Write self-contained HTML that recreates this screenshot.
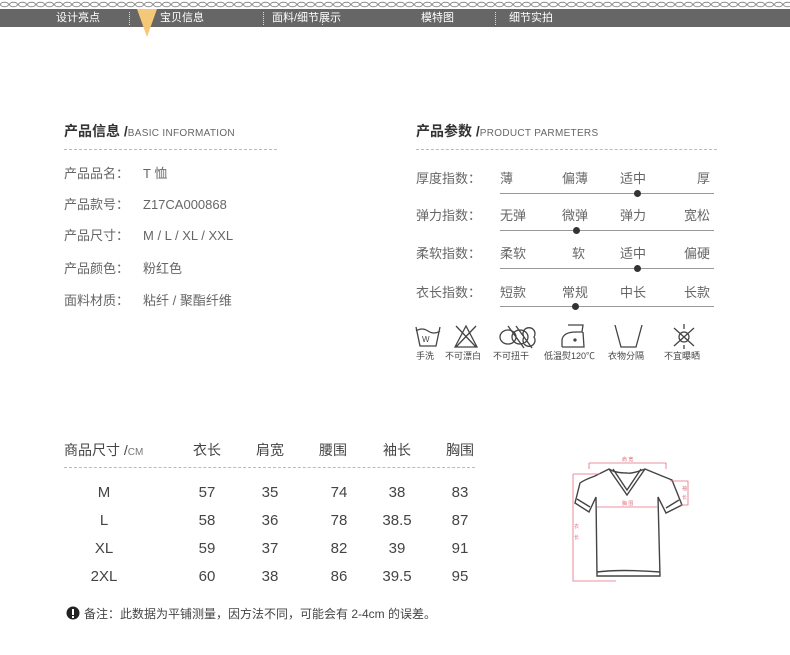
<!DOCTYPE html>
<html><head><meta charset="utf-8"><style>
*{margin:0;padding:0;box-sizing:border-box}
body{width:790px;height:655px;background:#fff;position:relative;overflow:hidden;font-family:"Liberation Sans","Noto Sans CJK SC",sans-serif;color:#555}
.a{position:absolute;white-space:nowrap}
.nav{position:absolute;left:0;top:9px;width:790px;height:18px;background:#666}
.nav span{position:absolute;top:2px;color:#fff;font-size:11px;line-height:14px}
.sep{position:absolute;top:3px;height:13px;border-left:1px dotted #ddd}
.t{font-size:14px;font-weight:bold;color:#333}
.t small{font-size:10px;font-weight:normal;color:#666;letter-spacing:.3px}
.dl{position:absolute;border-top:1px dashed #bbb;height:0}
.r{font-size:13px;color:#666;line-height:16px}
.v{position:absolute;left:143px;font-size:13px;color:#666;white-space:nowrap;line-height:16px}
.sl{position:absolute;height:1px;background:#999;left:500px;width:214px}
.dot{position:absolute;width:7px;height:7px;border-radius:50%;background:#333}
.il{font-size:9px;color:#444;top:349px}
.c{position:absolute;font-size:15px;color:#444;transform:translateX(-50%)}
.h{position:absolute;font-size:14px;color:#444;transform:translateX(-50%)}
</style></head><body>
<svg class="a" style="left:0;top:0" width="790" height="9"><defs><pattern id="ch" width="9" height="9" patternUnits="userSpaceOnUse"><ellipse cx="4.5" cy="4.5" rx="4" ry="2.3" fill="none" stroke="#888" stroke-width="1"/></pattern></defs><rect width="790" height="9" fill="url(#ch)"/></svg>
<div class="nav">
<span style="left:56px">设计亮点</span>
<div class="sep" style="left:129px"></div>
<span style="left:160px">宝贝信息</span>
<div class="sep" style="left:145px"></div>
<span style="left:272px">面料/细节展示</span>
<div class="sep" style="left:263px"></div>
<div class="sep" style="left:322px"></div>
<span style="left:421px">模特图</span>
<div class="sep" style="left:495px"></div>
<span style="left:509px">细节实拍</span>
</div>
<svg class="a" style="left:137px;top:9px" width="20" height="28"><polygon points="0,0 20,0 10,28" fill="#f5c878"/></svg>

<div class="a t" style="left:64px;top:121px">产品信息 /<small>BASIC INFORMATION</small></div>
<div class="dl" style="left:64px;top:149px;width:213px"></div>
<div class="a r" style="left:64px;top:166px">产品品名：</div><div class="v" style="top:166px">T 恤</div>
<div class="a r" style="left:64px;top:197px">产品款号：</div><div class="v" style="top:197px">Z17CA000868</div>
<div class="a r" style="left:64px;top:228px">产品尺寸：</div><div class="v" style="top:228px">M / L / XL / XXL</div>
<div class="a r" style="left:64px;top:261px">产品颜色：</div><div class="v" style="top:261px">粉红色</div>
<div class="a r" style="left:64px;top:293px">面料材质：</div><div class="v" style="top:293px">粘纤 / 聚酯纤维</div>

<div class="a t" style="left:416px;top:121px">产品参数 /<small>PRODUCT PARMETERS</small></div>
<div class="dl" style="left:416px;top:149px;width:301px"></div>

<div class="a r" style="left:416px;top:171px">厚度指数：</div>
<div class="a r" style="left:500px;top:171px">薄</div><div class="a r" style="left:562px;top:171px">偏薄</div><div class="a r" style="left:620px;top:171px">适中</div><div class="a r" style="left:697px;top:171px">厚</div>
<div class="sl" style="top:193px"></div><div class="dot" style="left:634px;top:190px"></div>

<div class="a r" style="left:416px;top:208px">弹力指数：</div>
<div class="a r" style="left:500px;top:208px">无弹</div><div class="a r" style="left:562px;top:208px">微弹</div><div class="a r" style="left:620px;top:208px">弹力</div><div class="a r" style="left:684px;top:208px">宽松</div>
<div class="sl" style="top:230px"></div><div class="dot" style="left:573px;top:227px"></div>

<div class="a r" style="left:416px;top:246px">柔软指数：</div>
<div class="a r" style="left:500px;top:246px">柔软</div><div class="a r" style="left:572px;top:246px">软</div><div class="a r" style="left:620px;top:246px">适中</div><div class="a r" style="left:684px;top:246px">偏硬</div>
<div class="sl" style="top:268px"></div><div class="dot" style="left:634px;top:265px"></div>

<div class="a r" style="left:416px;top:285px">衣长指数：</div>
<div class="a r" style="left:500px;top:285px">短款</div><div class="a r" style="left:562px;top:285px">常规</div><div class="a r" style="left:620px;top:285px">中长</div><div class="a r" style="left:684px;top:285px">长款</div>
<div class="sl" style="top:306px"></div><div class="dot" style="left:572px;top:303px"></div>

<svg class="a" style="left:412px;top:320px" width="310" height="30" fill="none" stroke="#444" stroke-width="1.3">
<path d="M4 7 L8 26 H24 L28 7 M4 11 Q10 7 16 11 Q22 15 28 11"/><text x="10" y="22" font-size="8" fill="#444" stroke="none">W</text>
<path d="M43 27 L54 6 L65 27 Z M44 6 L64 27 M64 6 L44 27"/>
<path d="M88 17 a8 7 0 1 0 16 0 a8 7 0 1 0 -16 0 M100 17 a8 7 0 1 0 16 0 a8 7 0 1 0 -16 0 M112 17 a6 6 0 1 0 10 0 a6 6 0 1 0 -10 0 M96 6 L112 28 M104 6 L120 28"/>
<path d="M150 27 L150 20 Q151 12 164 12 L170 12 L171 5 L156 5 M150 27 L172 27 L171 12"/><circle cx="163" cy="20" r="1" fill="#444"/>
<path d="M203 5 L209 27 H224 L230 5"/>
<path d="M262 8 L282 26 M282 8 L262 26"/><circle cx="272" cy="17" r="5"/><path d="M272 4 V9 M272 25 V29"/>
</svg>
<div class="a il" style="left:416px">手洗</div>
<div class="a il" style="left:445px">不可漂白</div>
<div class="a il" style="left:493px">不可扭干</div>
<div class="a il" style="left:544px">低温熨120℃</div>
<div class="a il" style="left:608px">衣物分隔</div>
<div class="a il" style="left:664px">不宜曝晒</div>

<div class="a" style="left:64px;top:440px;font-size:14px;color:#444">商品尺寸 /<span style="font-size:10px;color:#777">CM</span></div>
<div class="h" style="left:207px;top:440px">衣长</div>
<div class="h" style="left:270px;top:440px">肩宽</div>
<div class="h" style="left:333px;top:440px">腰围</div>
<div class="h" style="left:397px;top:440px">袖长</div>
<div class="h" style="left:460px;top:440px">胸围</div>
<div class="dl" style="left:64px;top:467px;width:411px"></div>

<div class="c" style="left:104px;top:484px">M</div><div class="c" style="left:207px;top:484px">57</div><div class="c" style="left:270px;top:484px">35</div><div class="c" style="left:339px;top:484px">74</div><div class="c" style="left:397px;top:484px">38</div><div class="c" style="left:460px;top:484px">83</div>
<div class="c" style="left:104px;top:512px">L</div><div class="c" style="left:207px;top:512px">58</div><div class="c" style="left:270px;top:512px">36</div><div class="c" style="left:339px;top:512px">78</div><div class="c" style="left:397px;top:512px">38.5</div><div class="c" style="left:460px;top:512px">87</div>
<div class="c" style="left:104px;top:540px">XL</div><div class="c" style="left:207px;top:540px">59</div><div class="c" style="left:270px;top:540px">37</div><div class="c" style="left:339px;top:540px">82</div><div class="c" style="left:397px;top:540px">39</div><div class="c" style="left:460px;top:540px">91</div>
<div class="c" style="left:104px;top:568px">2XL</div><div class="c" style="left:207px;top:568px">60</div><div class="c" style="left:270px;top:568px">38</div><div class="c" style="left:339px;top:568px">86</div><div class="c" style="left:397px;top:568px">39.5</div><div class="c" style="left:460px;top:568px">95</div>

<svg class="a" style="left:560px;top:455px" width="140" height="140" fill="none">
<g stroke="#444" stroke-width="1.4">
<path d="M49 14 L35 21 Q24 25 20 28 L15 48 L29 57 L36 42 L37 121 L100 121 L98 42 L106 58 L122 50 L112 25 Q102 21 85 14 Q72 19 67 18 Q55 18 49 14 Z"/>
<path d="M49 14 L67 40 L85 14 M53 14 L67 35 L81 14"/>
<path d="M17 44 L30 52 M119 45 L106 53 M37 117 Q60 114 100 117"/>
</g>
<g stroke="#e07080" stroke-width="0.8">
<path d="M29 8 H106 V14 M29 8 V14"/>
<path d="M37 52 H98"/>
<path d="M13 19 V126 H56 M13 19 H40"/>
<path d="M110 26 H128 V50 H120"/>
</g>
<g fill="#e07080" font-size="5">
<text x="62" y="6">肩 宽</text><text x="62" y="50">胸 围</text><text x="14" y="73">衣</text><text x="14" y="84">长</text><text x="122" y="35">袖</text><text x="122" y="44">长</text>
</g>
</svg>

<svg class="a" style="left:66px;top:606px" width="14" height="14"><circle cx="7" cy="7" r="6.5" fill="#222"/><rect x="6" y="3" width="2" height="6" fill="#fff"/><rect x="6" y="10" width="2" height="2" fill="#fff"/></svg>
<div class="a" style="left:84px;top:605px;font-size:12px;color:#444">备注：此数据为平铺测量，因方法不同，可能会有 2-4cm 的误差。</div>
</body></html>
